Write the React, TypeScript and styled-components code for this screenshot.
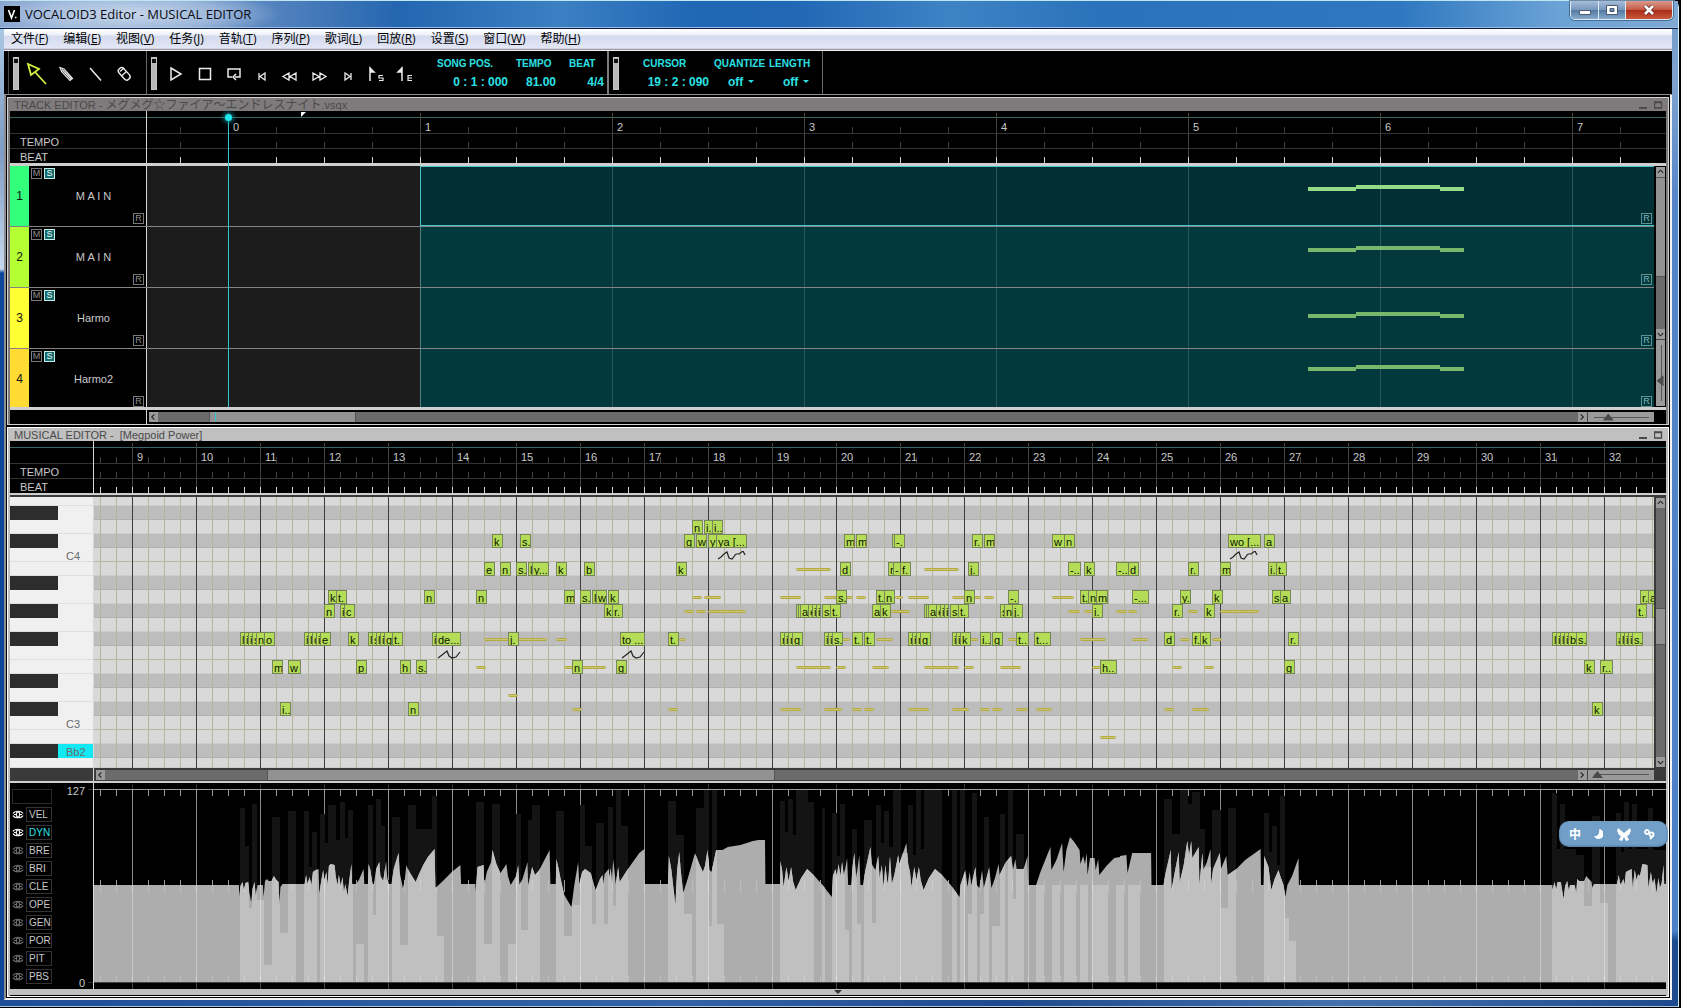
import React from "react";
import styled, { createGlobalStyle, css } from "styled-components";

const GlobalStyle = createGlobalStyle`
  *, *::before, *::after { box-sizing: border-box; }
  body {
    margin: 0;
    background: #000;
    font-family: "Liberation Sans", "Noto Sans CJK SC", sans-serif;
    font-size: 11px;
    color: #c8c8c8;
    overflow: hidden;
  }
  button, select, input { font: inherit; color: inherit; margin: 0; padding: 0; border: 0; background: none; }
`;

const sans = `"Liberation Sans", "Noto Sans CJK SC", sans-serif`;
const cyan = "#2be0e4";

/* ---------- window frame ---------- */

const Frame = styled.div`
  margin-right: 2px;
  padding: 0 6px 6px 4px;
  border-radius: 0 7px 0 0;
  border-top: 1px solid #bfe4f2;
  border-right: 1px solid #d4eefa;
  border-bottom: 1px solid #a9c4e6;
  background:
    linear-gradient(90deg, #1e4f97, #3363a5 40%, #1d4a8c 60%, #4470ad 80%, #1d4a8c) left bottom / 100% 6px no-repeat,
    linear-gradient(180deg, #a9c6e2 0, #a9c6e2 30px, #7f9cc4 150px, #c6d8ec 268px, #0c479a 272px, #0c479a) left top / 4px 100% no-repeat,
    linear-gradient(180deg, #6f9cc9 0, #7fa3cf 80px, #5585c8 200px, #4b7fc6 930px, #1b4a8f 940px) right top / 8px 100% no-repeat;
`;

const TitleBar = styled.header`
  display: flex;
  align-items: center;
  height: 28px;
  margin: 0 -6px 0 -4px;
  padding: 0 5px 1px 4px;
  gap: 5px;
  border-bottom: 1px solid #0b1f4a;
  background:
    radial-gradient(ellipse 150px 26px at 130px 13px, rgba(220, 230, 242, 0.8), rgba(200, 216, 236, 0.55) 60%, transparent 100%),
    linear-gradient(180deg, transparent 26px, #9dbde0 26px),
    linear-gradient(90deg, #86a4cf 0, #5c88c0 250px, #2466b0 400px, #3c7fc2 560px, #1f66b4 700px, #2268b5 800px, #3e83c4 950px, #2a72ba 1100px, #2f78c0 1400px, #6ba3d6 1560px, #7fa9d2 100%);
`;

const Logo = styled.svg`
  width: 16px;
  height: 16px;
`;

const WindowTitle = styled.h1`
  margin: 0;
  flex: 1;
  font: 400 13px/16px "Open Sans", "Noto Sans", sans-serif;
  color: #0a0a12;
`;

const CaptionButtons = styled.div`
  display: flex;
  align-self: flex-start;
  height: 19px;
  border: 1px solid #dcebf6;
  border-top: 0;
  border-radius: 0 0 5px 5px;
  overflow: hidden;
  box-shadow: 0 0 0 1px rgba(20, 50, 90, 0.5);
`;

const CaptionButton = styled.button<{ $close?: boolean }>`
  width: ${(p) => (p.$close ? 47 : 27)}px;
  display: flex;
  align-items: center;
  justify-content: center;
  border-left: 1px solid #dcebf6;
  background: ${(p) =>
    p.$close
      ? "linear-gradient(180deg,#d99a8c 0,#c65a45 48%,#a92c17 50%,#c9573c 100%)"
      : "linear-gradient(180deg,#a6bdd8 0,#7898be 48%,#54779f 50%,#86a9cd 100%)"};
  &:first-child { border-left: 0; }
`;

const MenuBar = styled.nav`
  display: flex;
  gap: 1px;
  height: 22px;
  padding-top: 1px;
  border-bottom: 1px solid #f4f4f6;
  box-shadow: inset 0 -1px 0 #9a9aa6, inset 0 -2px 0 #d0d2e0;
  background: linear-gradient(180deg, #fff 0, #eef0f9 6px, #d4dbee 7px, #e2e6f5 19px);
`;

const MenuItem = styled.button`
  padding: 0 7px;
  font: 400 12px/16px "Open Sans", "Noto Sans CJK SC", sans-serif;
  color: #000;
  height: 18px;
`;

/* ---------- toolbar ---------- */

const Toolbar = styled.div`
  display: flex;
  height: 44px;
  padding-left: 4px;
  background: #000;
  border-bottom: 1px solid #909090;
  color: ${cyan};
`;

const ToolGroup = styled.div<{ $end?: string; $w: number }>`
  display: flex;
  width: ${(p) => p.$w}px;
  padding: 6px 0 4px 4px;
  border-right: ${(p) => p.$end ?? "1px solid #666"};
  &:first-child { border-left: 1px solid #4c4c4c; }
`;

const Grip = styled.span`
  flex: none;
  width: 6px;
  height: 33px;
  background: #b8b8b8;
  border: 1px solid #c4c4c4;
  &::before {
    content: "";
    display: block;
    width: 4px;
    height: 4px;
    margin-top: 1px;
    background: #111;
  }
`;

const ToolRow = styled.div<{ $pad: number }>`
  display: flex;
  align-items: center;
  padding-left: ${(p) => p.$pad}px;
`;

const ToolButton = styled.button<{ $w?: number }>`
  width: ${(p) => p.$w ?? 29}px;
  height: 28px;
  color: #e8e8e8;
  svg { display: block; width: 20px; height: 24px; margin: 0 auto; overflow: visible; }
`;

const Readout = styled.div<{ $w: number; $ml?: number }>`
  display: flex;
  flex-direction: column;
  width: ${(p) => p.$w}px;
  margin-left: ${(p) => p.$ml ?? 0}px;
  font-weight: 700;
  white-space: pre;
`;

const ReadoutLabel = styled.label`
  font-size: 10px;
  line-height: 14px;
`;

const ReadoutValue = styled.output`
  font-size: 12px;
  line-height: 16px;
  margin-top: 3px;
  text-align: right;
`;

const Picker = styled.div`
  display: flex;
  align-items: center;
  margin: 3px 0 0 14px;
  gap: 3px;
`;

const PickerSelect = styled.select`
  appearance: none;
  font-weight: 700;
  font-size: 12px;
  line-height: 16px;
  height: 16px;
  width: 17px;
  outline: none;
`;

/* ---------- MDI panels ---------- */

const Workspace = styled.main`
  padding: 2px 1px 1px 1px;
  display: flex;
  flex-direction: column;
  gap: 2px;
  background: #000;
  border: 0 solid #f2f2f2;
  border-width: 0 2px 2px 2px;
  border-left-color: #8c8c92;
`;

const Panel = styled.section<{ $active?: boolean }>`
  padding: 0 2px;
  border: 1px solid ${(p) => (p.$active ? "#fff" : "#d0d0d0")};
  background: ${(p) => (p.$active ? "#c0c0c0" : "#7f7b7c")};
`;

const PanelBody = styled.div`
  background: #000;
`;

const PanelTitle = styled.div`
  display: flex;
  height: 13px;
  padding-left: 4px;
  overflow: hidden;
  color: #4a4a4a;
`;

const PanelName = styled.h2`
  flex: 1;
  margin: 0;
  font: 400 11px/15px ${sans};
  white-space: pre;
`;

const FileName = styled.span`
  font: 400 12px/15px "Liberation Sans", "Noto Sans CJK JP", sans-serif;
`;

const PanelButton = styled.button`
  width: 15px;
  height: 13px;
  svg { display: block; margin: 0 auto; }
`;

/* ---------- ruler ---------- */

const Header = styled.div`
  display: flex;
  height: 52px;
  position: relative;
  background: linear-gradient(#3b6464, #3b6464) 0 6px / 100% 1px no-repeat;
`;

const HeaderLabels = styled.div<{ $w: number }>`
  width: ${(p) => p.$w}px;
  border-right: 1px solid #d8d8d8;
`;

const HeaderRow = styled.div<{ $first?: boolean; $last?: boolean }>`
  height: ${(p) => (p.$first ? 23 : p.$last ? 14 : 15)}px;
  border-bottom: ${(p) => (p.$last ? "0" : "1px solid #333")};
  padding-left: 10px;
  font-size: 11px;
  line-height: 16px;
`;

const Scale = styled.div<{ $pitch: number; $offset: number }>`
  flex: 1;
  min-width: 0;
  background:
    linear-gradient(90deg, #454545 1px, transparent 1px) ${(p) => p.$offset}px 2px / ${(p) => p.$pitch}px 50px repeat-x;
`;

const ScaleRow = styled.div<{ $pitch: number; $offset: number; $kind: "bars" | "tempo" | "beat" }>`
  display: flex;
  overflow: hidden;
  height: ${(p) => (p.$kind === "bars" ? 23 : p.$kind === "beat" ? 14 : 15)}px;
  padding-left: ${(p) => p.$offset}px;
  border-bottom: ${(p) => (p.$kind === "beat" ? "0" : "1px solid #333")};
  background: linear-gradient(90deg, ${(p) => (p.$kind === "beat" ? "#d8d8d8" : "#3d3d3d")} 1px, transparent 1px)
    ${(p) => p.$offset % (p.$pitch / 4)}px bottom / ${(p) => p.$pitch / 4}px 6px repeat-x;
`;

const Measure = styled.span<{ $pitch: number }>`
  flex: 0 0 ${(p) => p.$pitch}px;
  padding: 10px 0 0 5px;
  font-size: 11px;
  line-height: 12px;
`;

const Band = styled.div<{ $h: number; $dark?: boolean }>`
  height: ${(p) => p.$h}px;
  background: ${(p) => (p.$dark ? "#3a3a3a" : "#cfcfcf")};
`;

const PlayHead = styled.div`
  position: absolute;
  left: 218px;
  top: 6px;
  width: 1px;
  height: 290px;
  background: #31c8cc;
  z-index: 3;
  &::before {
    content: "";
    position: absolute;
    left: -3px;
    top: -3px;
    width: 7px;
    height: 7px;
    border-radius: 50%;
    background: #1fe8f0;
    box-shadow: 0 0 4px 2px rgba(20, 150, 160, 0.7);
  }
`;

const EndFlag = styled.div`
  position: absolute;
  left: 291px;
  top: 1px;
  width: 5px;
  height: 5px;
  background: #fff;
  clip-path: polygon(0 0, 100% 0, 0 100%);
`;

/* ---------- tracks ---------- */

const TrackArea = styled.div`
  display: flex;
  height: 241px;
`;

const TrackList = styled.div`
  flex: 1;
  min-width: 0;
  overflow: hidden;
`;

const TrackRow = styled.div`
  display: flex;
  height: 61px;
  border-bottom: 1px solid #838383;
`;

const TrackNumber = styled.div<{ $c: string }>`
  width: 19px;
  background: ${(p) => p.$c};
  color: #111;
  text-align: center;
  font-size: 12px;
  line-height: 60px;
`;

const TrackHead = styled.div`
  display: grid;
  grid-template-rows: 11px 1fr 11px;
  width: 118px;
  padding: 2px;
  border-right: 1px solid #d8d8d8;
`;

const Toggles = styled.div`
  display: flex;
  gap: 2px;
`;

const BoxButton = styled.button<{ $tone?: "solo" | "teal" }>`
  display: block;
  width: 11px;
  height: 11px;
  border: 1px solid #7a7a7a;
  font-size: 9px;
  line-height: 9px;
  text-align: center;
  color: #909090;
  ${(p) => p.$tone === "solo" && css`border-color: #c8ecec; background: #156a6c; color: #e8ffff;`}
  ${(p) => p.$tone === "teal" && css`border-color: #5d9293; color: #7ab2b3;`}
`;

const TrackName = styled.div`
  align-self: center;
  padding-left: 12px;
  text-align: center;
  font-size: 11px;
  line-height: 14px;
  white-space: pre;
`;

const EndCell = styled.div`
  display: flex;
  justify-content: flex-end;
`;

const Lane = styled.div`
  flex: 1;
  min-width: 0;
  display: flex;
  padding-left: 273px;
  background: #1c1c1c;
`;

const Part = styled.div<{ $selected?: boolean }>`
  flex: 1;
  min-width: 0;
  position: relative;
  display: flex;
  justify-content: flex-end;
  align-items: flex-end;
  padding: 0 2px 2px 0;
  overflow: hidden;
  border-left: 1px solid #4f8283;
  background:
    linear-gradient(90deg, #25595b 1px, transparent 1px) -1px 0 / 192px 100%,
    ${(p) => (p.$selected ? "#022f33" : "#03393d")};
  ${(p) => p.$selected && css`border: solid #42c6cc; border-width: 1px 0 1px 1px; padding-bottom: 1px;`}
`;

const Phrase = styled.svg<{ $top: number }>`
  position: absolute;
  left: 887px;
  top: ${(p) => p.$top}px;
  width: 156px;
  height: 6px;
`;

/* ---------- scroll bars ---------- */

const VColumn = styled.div<{ $bg?: string }>`
  display: flex;
  flex-direction: column;
  align-items: center;
  width: 12px;
  padding: 1px 0;
  background: ${(p) => p.$bg ?? "#000"};
`;

const HRow = styled.div<{ $bg?: string; $h: number }>`
  display: flex;
  align-items: center;
  height: ${(p) => p.$h}px;
  background: ${(p) => p.$bg ?? "#000"};
`;

const HSpacer = styled.div<{ $w: number }>`
  width: ${(p) => p.$w}px;
  align-self: stretch;
  margin-right: 2px;
  border-right: 1px solid #d8d8d8;
`;

const HEnd = styled.div`
  width: 12px;
`;

const Arrow = styled.button`
  flex: none;
  width: 9px;
  height: 10px;
  background: #9a9a9a;
  svg { display: block; margin: 0 auto; }
`;

const ScrollTrack = styled.div<{ $vertical?: boolean; $size?: number }>`
  position: relative;
  flex: ${(p) => (p.$size ? `0 0 ${p.$size}px` : "1")};
  ${(p) => (p.$vertical ? "width: 9px;" : "height: 10px;")}
  background: #6b6b6b;
`;

const HThumb = styled.div<{ $start: number; $size: number }>`
  position: absolute;
  left: ${(p) => p.$start}px;
  width: ${(p) => p.$size}px;
  height: 100%;
  background: #929292;
  border: solid #555;
  border-width: 0 1px;
`;

const VThumb = styled.div<{ $start: number; $size: number }>`
  position: absolute;
  top: ${(p) => p.$start}px;
  height: ${(p) => p.$size}px;
  width: 100%;
  background: #929292;
  border: solid #555;
  border-width: 1px 0;
`;

const Marker = styled.div`
  position: absolute;
  left: 57px;
  width: 1px;
  height: 100%;
  background: #31c8cc;
`;

const ZoomBox = styled.div<{ $vertical?: boolean }>`
  display: flex;
  align-items: center;
  justify-content: center;
  background: #9a9a9a;
  ${(p) => (p.$vertical ? "width: 9px; flex: 1; border-top: 1px solid #444;" : "width: 67px; height: 10px; border-left: 1px solid #444;")}
  overflow: hidden;
`;

const Zoom = styled.input<{ $vertical?: boolean }>`
  appearance: none;
  display: block;
  ${(p) =>
    p.$vertical
      ? css`writing-mode: vertical-lr; width: 9px; height: 60px;
          background: linear-gradient(#555, #555) 5px center / 1px 56px no-repeat;`
      : css`width: 60px; height: 9px;
          background: linear-gradient(#555, #555) center 4px / 55px 1px no-repeat;`}
  &::-webkit-slider-thumb {
    appearance: none;
    ${(p) => (p.$vertical ? "width: 7px; height: 11px;" : "width: 11px; height: 7px;")}
    background: #4a4a4a;
    clip-path: ${(p) => (p.$vertical ? "polygon(0 50%, 100% 0, 100% 100%)" : "polygon(50% 0, 100% 100%, 0 100%)")};
  }
`;

/* ---------- piano roll ---------- */

const RollArea = styled.div`
  display: flex;
  height: 271px;
`;

const Keyboard = styled.div`
  display: flex;
  flex-direction: column;
  justify-content: flex-end;
  width: 84px;
  overflow: hidden;
  border-right: 1px solid #d8d8d8;
  background: #f0f0f0;
`;

const Key = styled.div<{ $black?: boolean; $hot?: boolean; $h: number }>`
  flex: none;
  height: ${(p) => p.$h}px;
  padding: 1px 0 0 56px;
  font-size: 11px;
  line-height: 15px;
  color: #6a6a6a;
  border-bottom: ${(p) => (p.$black ? "0" : "1px solid #dedede")};
  background: ${(p) =>
    p.$black ? `linear-gradient(90deg, #2d2d2d 48px, ${p.$hot ? "#10e8f2" : "#f0f0f0"} 48px)` : "#f0f0f0"};
`;

const Roll = styled.div`
  flex: 1;
  min-width: 0;
  position: relative;
  overflow: hidden;
  display: flex;
  flex-direction: column;
`;

const Pitch = styled.div<{ $black?: boolean; $seam?: boolean; $h: number }>`
  flex: none;
  height: ${(p) => p.$h}px;
  background: ${(p) => (p.$black ? "#bdbdbd" : "#d9d9d9")};
  border-bottom: 1px solid ${(p) => (p.$seam ? "#b9b9a3" : p.$black ? "#b0b0b0" : "#cdcdcd")};
`;

const BeatLines = styled.div`
  position: absolute;
  inset: 0;
  background:
    linear-gradient(90deg, #3c3c3c 1px, transparent 1px) 38px 0 / 64px 100%,
    linear-gradient(90deg, #b5b59c 1px, transparent 1px) 6px 0 / 16px 100%;
`;

const Note = styled.div`
  position: absolute;
  height: 14px;
  border: 1px solid #77865a;
  background: #b4dc56;
  color: #0c1404;
  font-size: 11px;
  line-height: 14px;
  padding-left: 1px;
  overflow: hidden;
  white-space: pre;
  text-align: left;
`;

const Ghost = styled.div`
  position: absolute;
  height: 3px;
  border-radius: 2px;
  border: 1px solid #b5ab3c;
  background: #c9c77c;
`;

const Vibrato = styled.svg`
  position: absolute;
  height: 9px;
`;

/* ---------- control parameters ---------- */

const ParamArea = styled.div`
  display: flex;
  height: 206px;
`;

const ParamList = styled.div`
  display: grid;
  grid-template-columns: 14px 26px;
  grid-auto-rows: 15px;
  row-gap: 3px;
  align-content: start;
  padding: 6px 0 0 2px;
  width: 44px;
`;

const ParamBlank = styled.div`
  grid-column: 1 / 3;
  border: 1px solid #2c2c2c;
`;

const EyeButton = styled.button<{ $on?: boolean }>`
  color: ${(p) => (p.$on ? "#f4f4f4" : "#6a6a6a")};
  svg { display: block; }
`;

const ParamButton = styled.button<{ $active?: boolean }>`
  border: 1px solid #333;
  padding-left: 2px;
  text-align: left;
  font: 400 10px/13px ${sans};
  color: ${(p) => (p.$active ? cyan : "#c8c8c8")};
  overflow: hidden;
`;

const Limits = styled.div`
  display: flex;
  flex-direction: column;
  justify-content: space-between;
  width: 40px;
  padding: 2px 8px 0 0;
  text-align: right;
  font-size: 11px;
  line-height: 12px;
  border-right: 1px solid #d8d8d8;
  background:
    linear-gradient(#333, #333) right 6px / 5px 1px no-repeat,
    linear-gradient(#333, #333) right 199px / 5px 1px no-repeat;
`;

const Graph = styled.svg`
  flex: 1;
  min-width: 0;
  height: 206px;
  display: block;
`;

const Splitter = styled.button`
  display: flex;
  justify-content: center;
  width: 100%;
  height: 6px;
  background: #c0c0c0;
  svg { display: block; }
`;

const BottomEdge = styled.div`
  height: 1px;
  background: #000;
`;

/* ---------- input method bar ---------- */

const ImeBar = styled.aside`
  position: absolute;
  right: 13px;
  top: 821px;
  display: flex;
  align-items: center;
  justify-content: space-between;
  width: 109px;
  height: 26px;
  padding: 0 13px 0 10px;
  border-radius: 10px;
  background: #719fc8;
  color: #fff;
  font: 700 12px/16px "Noto Sans CJK SC", sans-serif;
  z-index: 5;
  box-shadow: inset 0 -1px 2px rgba(40, 80, 130, 0.5);
`;

/* ---------- data ---------- */

const menus: [string, string][] = [
  ["文件", "F"], ["编辑", "E"], ["视图", "V"], ["任务", "J"], ["音轨", "T"], ["序列", "P"],
  ["歌词", "L"], ["回放", "R"], ["设置", "S"], ["窗口", "W"], ["帮助", "H"],
];

const tracks = [
  { name: "M A I N", color: "#33ff7a", phrase: 18, selected: true },
  { name: "M A I N", color: "#b4ff33", phrase: 19, selected: false },
  { name: "Harmo", color: "#ffff33", phrase: 24, selected: false },
  { name: "Harmo2", color: "#ffdb33", phrase: 16, selected: false },
];

type K = { h: number; b?: boolean; t?: string; hot?: boolean; seam?: boolean };
const keys: K[] = [
  { h: 9 }, { h: 14, b: true }, { h: 14 }, { h: 14, b: true }, { h: 14, t: "C4", seam: true }, { h: 14 },
  { h: 14, b: true }, { h: 14 }, { h: 14, b: true }, { h: 14 }, { h: 14, b: true }, { h: 14, seam: true }, { h: 14 },
  { h: 14, b: true }, { h: 14 }, { h: 14, b: true }, { h: 14, t: "C3", seam: true }, { h: 14 },
  { h: 14, b: true, t: "Bb2", hot: true }, { h: 10 },
];

/* key row → notes as [start, width, lyric] in roll pixels */
const notes: Record<number, [number, number, string][]> = {
  23: [[598, 11, "n"], [610, 9, "i."], [618, 11, "i.."]],
  37: [[398, 11, "k"], [426, 11, "s."], [590, 11, "g"], [602, 11, "w"], [614, 9, "y"], [622, 31, "ya [..."],
    [750, 11, "m"], [762, 11, "m"], [798, 3, ""], [800, 11, "-."], [878, 11, "r."], [890, 11, "m"],
    [958, 13, "w"], [970, 11, "n"], [1134, 33, "wo [..."], [1170, 11, "a"]],
  65: [[390, 11, "e"], [406, 11, "n"], [422, 11, "s."], [434, 5, "l"], [438, 17, "y..."], [462, 11, "k"], [490, 11, "b"],
    [582, 11, "k"], [746, 11, "d"], [794, 6, "r"], [799, 8, "-"], [806, 11, "f."], [874, 11, "j."],
    [974, 13, "-.."], [990, 11, "k"], [1022, 13, "-.."], [1034, 11, "d"], [1094, 11, "r."], [1126, 11, "m"],
    [1174, 9, "i."], [1182, 11, "t."]],
  93: [[234, 9, "k"], [242, 11, "t."], [330, 11, "n"], [382, 11, "n"], [470, 11, "m"], [486, 11, "s."], [498, 5, "l"],
    [502, 11, "w"], [514, 11, "k"], [742, 11, "s."], [782, 9, "t."], [790, 11, "n"], [870, 11, "n"], [914, 11, "-."],
    [986, 9, "t."], [994, 9, "n"], [1002, 12, "m"], [1038, 17, "-..."], [1086, 11, "y."], [1118, 11, "k"],
    [1178, 9, "s"], [1186, 11, "a"], [1546, 9, "r."], [1554, 11, "a"]],
  107: [[230, 11, "n"], [246, 5, "i"], [250, 11, "c"], [510, 9, "k"], [518, 11, "r."],
    [702, 3, ""], [704, 3, ""], [706, 9, "a"], [714, 5, "e"], [718, 5, "i"], [722, 5, "i"], [728, 9, "s"], [736, 11, "t."],
    [778, 9, "a"], [786, 11, "k"],
    [830, 3, ""], [832, 3, ""], [834, 9, "a"], [842, 5, "e"], [846, 5, "i"], [850, 5, "i"], [856, 9, "s"], [864, 11, "t."],
    [906, 5, "s"], [910, 9, "n"], [918, 11, "j."], [998, 11, "i."], [1078, 11, "r."], [1110, 11, "k"],
    [1542, 11, "t."], [1558, 8, ""]],
  135: [[146, 5, "l"], [150, 5, "i"], [154, 5, "i"], [158, 5, "s"], [162, 9, "n"], [170, 11, "o"],
    [210, 5, "i"], [214, 5, "l"], [218, 5, "d"], [222, 5, "i"], [226, 11, "e"], [254, 11, "k"],
    [274, 5, "l"], [278, 5, "s"], [282, 5, "l"], [286, 5, "i"], [290, 9, "g"], [298, 11, "t."],
    [338, 5, "i"], [342, 25, "de..."], [414, 11, "j."], [526, 25, "to ..."], [574, 11, "t."],
    [686, 5, "r"], [690, 5, "i"], [694, 5, "r"], [698, 11, "g"], [730, 5, "i"], [734, 5, "i"], [738, 11, "s."],
    [758, 11, "t."], [770, 11, "t."], [814, 5, "r"], [818, 5, "i"], [822, 5, "r"], [826, 11, "g"],
    [858, 5, "i"], [862, 5, "i"], [866, 11, "k"], [886, 11, "i.."], [898, 11, "g"], [922, 13, "t.."], [940, 17, "t..."],
    [1070, 11, "d"], [1098, 9, "f."], [1106, 11, "k"], [1194, 11, "r."],
    [1458, 5, "l"], [1462, 5, "i"], [1466, 5, "l"], [1470, 5, "i"], [1474, 9, "b"], [1482, 11, "s."],
    [1522, 5, "a"], [1526, 5, "l"], [1530, 5, "i"], [1534, 5, "i"], [1538, 11, "s."]],
  163: [[178, 11, "m"], [194, 13, "w"], [262, 11, "p"], [306, 11, "h"], [322, 11, "s."], [478, 11, "n"], [522, 11, "g"],
    [1006, 17, "h.."], [1190, 11, "g"], [1490, 11, "k"], [1506, 13, "r.."]],
  205: [[186, 11, "i.."], [314, 11, "n"], [1498, 11, "k"]],
};

const ghosts: Record<number, [number, number][]> = {
  65: [[702, 35], [830, 35]],
  93: [[598, 10], [610, 17], [686, 21], [730, 29], [762, 10], [801, 8], [814, 21], [858, 13], [880, 7], [890, 10], [958, 12], [968, 12]],
  107: [[590, 10], [602, 10], [614, 38], [797, 19], [974, 12], [990, 9], [1022, 11], [1034, 9], [1094, 10], [1126, 39]],
  135: [[390, 63], [462, 11], [585, 7], [748, 8], [782, 17], [876, 8], [914, 9], [986, 26], [1038, 16], [1086, 10], [1118, 10]],
  163: [[382, 10], [470, 10], [488, 24], [702, 35], [742, 10], [778, 17], [830, 35], [870, 10], [906, 21], [998, 9], [1078, 10], [1110, 10]],
  191: [[414, 10]],
  205: [[478, 10], [574, 10], [686, 21], [730, 18], [758, 10], [770, 10], [814, 21], [858, 17], [886, 10], [898, 10], [922, 12], [942, 16], [1070, 10], [1098, 17]],
  233: [[1006, 16]],
};

const vibratos: [number, number, number][] = [[343, 153, 0], [527, 153, 0], [623, 54, 1], [1135, 54, 1]];

/* velocity bars, three stretches of the song, as [from, to, top] at triple scale */
const velA: number[][] = [[672,686,113],[686,697,228],[697,706,413],[706,720,101],[720,739,390],[739,762,585],[762,784,141],[784,806,488],[806,829,123],[851,865,123],[865,874,292],[874,888,185],[896,910,131],[910,918,219],[918,941,104],[941,952,209],[952,966,95],[966,974,204],[974,988,119],[997,1019,521],[1030,1044,104],[1044,1053,435],[1053,1067,86],[1067,1078,167],[1078,1089,330],[1098,1120,141],[1120,1142,524],[1142,1165,104],[1165,1210,177],[1210,1224,77],[1224,1243,497],[1333,1356,95],[1356,1378,521],[1378,1400,101],[1422,1445,521],[1445,1459,131],[1459,1478,479],[1478,1490,150],[1490,1512,104],[1557,1568,123]];
const velB: number[][] = [[0,11,123],[11,34,497],[34,57,405],[57,70,105],[70,90,228],[90,101,461],[101,123,158],[123,134,461],[134,148,110],[148,157,408],[157,171,60],[171,190,167],[302,325,92],[325,347,195],[347,370,432],[381,403,113],[403,417,60],[417,426,467],[426,440,60],[440,459,461],[616,630,92],[630,638,185],[638,652,86],[652,661,195],[661,694,60],[694,711,95],[734,742,113],[762,776,128],[776,784,258],[784,798,101],[798,809,479],[818,832,176],[832,843,461],[851,874,150],[874,885,459],[885,899,104],[899,907,219],[907,921,122],[921,932,230],[932,955,60],[955,974,250],[974,988,104],[988,997,255],[997,1011,60],[1011,1019,237],[1019,1070,60],[1098,1112,60],[1120,1134,60],[1142,1154,432],[1154,1168,68],[1176,1187,432],[1187,1201,141],[1210,1232,467],[1232,1246,131],[1254,1268,60],[1268,1277,387],[1277,1299,191],[1333,1356,345],[1378,1400,345],[1411,1446,345],[1455,1478,345],[1490,1534,345],[1556,1568,345]];
const velC: number[][] = [[0,12,345],[21,57,345],[123,145,86],[145,168,191],[168,190,60],[190,201,101],[201,224,66],[224,238,177],[238,257,290],[257,281,119],[281,302,413],[302,325,113],[402,416,128],[416,425,246],[425,439,167],[439,447,285],[447,461,77],[461,472,443],[472,492,512],[1207,1221,68],[1221,1230,237],[1230,1244,101],[1244,1275,237],[1275,1297,255],[1297,1319,408],[1319,1342,138],[1342,1364,399],[1386,1400,128],[1400,1409,245],[1409,1423,95],[1423,1431,237],[1431,1445,101],[1445,1476,237],[1476,1490,113],[1490,1540,240]];

/* dynamics curve points as x,y pairs on the same scales */
const dynA = [262,345,669,345,670,378,673,347,679,336,683,360,687,338,695,336,698,365,703,396,707,357,713,336,716,378,721,345,736,345,738,381,742,333,748,327,752,333,760,333,767,318,774,330,780,336,782,405,785,351,791,342,853,342,857,315,861,342,867,322,872,345,876,306,884,300,892,297,894,369,900,330,905,300,908,330,914,306,917,345,921,288,926,282,937,284,940,318,945,345,949,315,954,348,959,322,963,366,967,342,973,378,978,330,984,282,986,342,997,342,1005,330,1018,297,1020,342,1030,342,1032,282,1037,300,1043,342,1047,342,1053,297,1062,276,1065,318,1073,333,1081,273,1084,318,1088,342,1096,342,1103,294,1116,249,1119,306,1128,354,1133,333,1138,285,1142,297,1150,312,1164,336,1172,315,1185,285,1198,261,1217,237,1219,354,1240,333,1265,306,1289,285,1291,342,1331,342,1332,363,1337,291,1354,285,1356,345,1363,306,1375,276,1379,240,1390,282,1401,308,1411,294,1418,282,1422,318,1430,345,1445,318,1451,285,1454,345,1463,327,1477,276,1479,348,1490,291,1498,315,1510,300,1539,240,1541,342,1556,342,1558,267,1565,300];
const dynB = [0,318,12,375,32,411,40,345,51,276,54,342,62,306,70,297,86,308,100,360,112,327,119,315,121,345,125,312,136,297,138,325,142,294,146,342,149,267,153,306,156,342,163,291,167,336,190,297,222,250,236,237,237,342,302,342,305,258,312,300,323,405,328,300,334,246,338,300,345,369,358,325,378,249,390,282,400,306,406,288,413,240,419,300,424,306,430,276,437,240,455,239,470,232,505,224,540,213,556,210,574,210,575,342,616,342,617,273,622,300,626,351,634,291,640,333,647,291,653,336,660,360,675,325,692,297,710,315,735,345,761,381,764,318,771,297,775,318,780,282,785,318,790,276,795,318,804,264,807,345,815,345,819,290,824,249,829,327,838,255,841,345,848,345,855,300,869,231,873,282,883,300,891,258,895,325,901,285,906,351,911,285,917,342,920,318,924,258,929,342,936,315,947,255,950,282,970,219,975,282,980,306,984,351,992,291,998,330,1005,291,1010,330,1018,360,1033,325,1050,297,1070,315,1094,345,1119,381,1121,345,1135,300,1141,350,1147,306,1152,345,1163,291,1167,345,1174,354,1182,300,1187,354,1202,291,1208,354,1218,325,1228,282,1231,315,1248,276,1263,258,1268,300,1275,268,1278,297,1298,297,1309,258,1311,345,1333,345,1345,306,1373,231,1376,300,1390,270,1406,219,1410,306,1418,240,1428,201,1440,216,1455,240,1457,282,1465,258,1470,282,1475,249,1477,315,1484,264,1497,264,1500,300,1507,267,1510,315,1530,288,1552,264,1568,261];
const dynC = [0,258,18,255,21,309,34,249,87,249,88,345,121,345,128,306,142,240,144,360,152,312,164,246,167,336,178,285,188,213,193,255,199,213,202,264,220,231,222,345,230,249,233,300,243,275,253,237,255,342,260,297,279,249,282,297,297,258,301,315,325,297,350,270,393,237,394,345,401,345,403,258,415,291,423,360,432,327,443,300,447,315,457,345,462,381,468,345,481,318,499,264,500,345,1208,345,1208,360,1215,336,1219,360,1223,336,1232,336,1240,387,1244,348,1250,333,1254,360,1258,345,1271,345,1275,369,1278,327,1283,333,1297,333,1303,318,1318,336,1320,354,1325,342,1389,342,1394,315,1399,345,1407,327,1410,345,1414,306,1430,297,1433,354,1439,300,1444,330,1448,312,1453,318,1460,282,1474,285,1477,354,1484,306,1489,342,1494,325,1499,369,1505,325,1509,354,1514,340,1519,285,1521,342,1900,342];

const graphX = (part: number, x: number) =>
  part === 0 ? x / 2.8 - 94 : part === 1 ? x / 2.8 + 466 : x / 2.795 + 1026;
const graphY = (y: number) => Math.round(y / 3) - 13;

const dynPoints = [dynA, dynB, dynC]
  .flatMap((list, part) => {
    const out: string[] = [];
    for (let i = 0; i < list.length; i += 2) out.push(`${graphX(part, list[i]).toFixed(1)},${graphY(list[i + 1])}`);
    return out;
  })
  .join(" ");
const dynArea = `0,199 ${dynPoints} 1800,199`;

const velBars = [velA, velB, velC].flatMap((list, part) =>
  list.map(([a, b, y]) => {
    const x0 = Math.round(graphX(part, a));
    return { x: x0, w: Math.round(graphX(part, b)) - x0, y: graphY(y) };
  })
);

const params = ["VEL", "DYN", "BRE", "BRI", "CLE", "OPE", "GEN", "POR", "PIT", "PBS"];

/* ---------- parts ---------- */

function Ruler({ label, pitch, offset, first, count, children }: {
  label: number; pitch: number; offset: number; first: number; count: number; children?: React.ReactNode;
}) {
  return (
    <Header>
      <HeaderLabels $w={label}>
        <HeaderRow $first />
        <HeaderRow>TEMPO</HeaderRow>
        <HeaderRow $last>BEAT</HeaderRow>
      </HeaderLabels>
      <Scale $pitch={pitch} $offset={offset}>
        <ScaleRow $pitch={pitch} $offset={offset} $kind="bars">
          {Array.from({ length: count }, (_, i) => (
            <Measure key={i} $pitch={pitch}>{first + i}</Measure>
          ))}
        </ScaleRow>
        <ScaleRow $pitch={pitch} $offset={offset} $kind="tempo" />
        <ScaleRow $pitch={pitch} $offset={offset} $kind="beat" />
      </Scale>
      {children}
    </Header>
  );
}

const arrowPaths = { left: "M6 2 3 5l3 3", right: "M3 2l3 3-3 3", up: "M2 6l3-3 3 3", down: "M2 4l3 3 3-3" };
function ScrollArrow({ dir }: { dir: keyof typeof arrowPaths }) {
  return (
    <Arrow aria-label={`Scroll ${dir}`}>
      <svg width="9" height="10" viewBox="0 0 10 10"><path d={arrowPaths[dir]} fill="none" stroke="#222" strokeWidth="1.200" /></svg>
    </Arrow>
  );
}

function PanelButtons() {
  return (
    <>
      <PanelButton aria-label="Minimize">
        <svg width="9" height="13"><path d="M0 9h8v2H0z" fill="currentColor" /></svg>
      </PanelButton>
      <PanelButton aria-label="Maximize">
        <svg width="9" height="13"><path d="M.5 4.500h7v5.500h-7z M0 4h8" fill="none" stroke="currentColor" strokeWidth="1.300" /></svg>
      </PanelButton>
    </>
  );
}

function Eye() {
  return (
    <svg width="12" height="15" viewBox="0 0 12 15" fill="none" stroke="currentColor">
      <path d="M1 6.500C2.500 3.500 9.500 3.500 11 6.500M1 8.500C2.500 11.500 9.500 11.500 11 8.500" strokeWidth="1.200" />
      <ellipse cx="6" cy="7.500" rx="1.600" ry="2.600" strokeWidth="1.200" />
      <path d="M2 7.500h2M8 7.500h2" />
    </svg>
  );
}

function ToolIcon({ children, accent }: { children: React.ReactNode; accent?: boolean }) {
  return (
    <svg viewBox="0 0 20 24" fill="none" stroke={accent ? "#d2f03c" : "#ececec"} strokeWidth="1.500">{children}</svg>
  );
}

function MainToolbar() {
  return (
    <Toolbar>
      <ToolGroup $w={139}>
        <ToolRow $pad={0}><Grip /></ToolRow>
        <ToolRow $pad={3}>
          <ToolButton aria-label="Arrow"><ToolIcon accent><path d="M1 2l11 5-8 6zM8 10l11 12" strokeWidth="1.800" /></ToolIcon></ToolButton>
          <ToolButton aria-label="Pencil"><ToolIcon><path d="M4 5.500l4 1.500 8.500 9.500-2.500 2L5.500 9.500zM6 7.500l9 9.500" strokeWidth="1.200" /></ToolIcon></ToolButton>
          <ToolButton aria-label="Line"><ToolIcon><path d="M5 6l11 12.500" /></ToolIcon></ToolButton>
          <ToolButton aria-label="Eraser"><ToolIcon>
            <rect x="7" y="5" width="6.500" height="14" rx="3" transform="rotate(-42 10 12)" strokeWidth="1.400" />
            <path d="M7.500 14l5-4.500M6 9.500l4-3.500" strokeWidth="1.200" />
          </ToolIcon></ToolButton>
        </ToolRow>
      </ToolGroup>
      <ToolGroup $w={462} $end="2px solid #7c7c7c">
        <Grip />
        <ToolRow $pad={4}>
          <ToolButton aria-label="Play"><ToolIcon><path d="M5 6l10 6-10 6z" /></ToolIcon></ToolButton>
          <ToolButton aria-label="Stop"><ToolIcon><path d="M4.500 6.500h11v11h-11z" /></ToolIcon></ToolButton>
          <ToolButton aria-label="Loop"><ToolIcon><path d="M8 15H4V7h12v8h-5M12 12l-3 3 3 3" /></ToolIcon></ToolButton>
          <ToolButton $w={27} aria-label="To start"><ToolIcon><path d="M7 11v7M13 11l-5 3.500 5 3.500z" strokeWidth="1.300" /></ToolIcon></ToolButton>
          <ToolButton aria-label="Rewind"><ToolIcon><path d="M9 11l-6 3.500L9 18zM16 11l-6 3.500 6 3.500z" strokeWidth="1.300" /></ToolIcon></ToolButton>
          <ToolButton aria-label="Forward"><ToolIcon><path d="M4 11l6 3.500L4 18zM11 11l6 3.500-6 3.500z" strokeWidth="1.300" /></ToolIcon></ToolButton>
          <ToolButton aria-label="To end"><ToolIcon><path d="M13 11v7M7 11l5 3.500L7 18z" strokeWidth="1.300" /></ToolIcon></ToolButton>
          <ToolButton $w={28} aria-label="Start marker"><ToolIcon><path d="M4 5v14M4 6l4 4H4z" fill="#ececec" /><path d="M17 13.500h-4v2.500h4v2.500h-4" strokeWidth="1.200" /></ToolIcon></ToolButton>
          <ToolButton $w={28} aria-label="End marker"><ToolIcon><path d="M8 5v14M8 6l-4 4h4z" fill="#ececec" /><path d="M18 13.500h-4v5h4M14 16h4" strokeWidth="1.200" /></ToolIcon></ToolButton>
        </ToolRow>
        <Readout $w={71} $ml={19}>
          <ReadoutLabel htmlFor="song">SONG POS.</ReadoutLabel>
          <ReadoutValue id="song">0 : 1 : 000</ReadoutValue>
        </Readout>
        <Readout $w={40} $ml={8}>
          <ReadoutLabel htmlFor="tempo">TEMPO</ReadoutLabel>
          <ReadoutValue id="tempo">81.00</ReadoutValue>
        </Readout>
        <Readout $w={35} $ml={13}>
          <ReadoutLabel htmlFor="beat">BEAT</ReadoutLabel>
          <ReadoutValue id="beat">4/4</ReadoutValue>
        </Readout>
      </ToolGroup>
      <ToolGroup $w={214}>
        <Grip />
        <Readout $w={66} $ml={24}>
          <ReadoutLabel htmlFor="cursor">CURSOR</ReadoutLabel>
          <ReadoutValue id="cursor">19 : 2 : 090</ReadoutValue>
        </Readout>
        <Readout $w={51} $ml={5}>
          <ReadoutLabel htmlFor="quantize">QUANTIZE</ReadoutLabel>
          <Picker>
            <PickerSelect id="quantize"><option>off</option></PickerSelect>
            <svg width="6" height="4"><path d="M0 0h6L3 3z" fill={cyan} /></svg>
          </Picker>
        </Readout>
        <Readout $w={44} $ml={4}>
          <ReadoutLabel htmlFor="length">LENGTH</ReadoutLabel>
          <Picker>
            <PickerSelect id="length"><option>off</option></PickerSelect>
            <svg width="6" height="4"><path d="M0 0h6L3 3z" fill={cyan} /></svg>
          </Picker>
        </Readout>
      </ToolGroup>
    </Toolbar>
  );
}

function TrackEditor() {
  return (
    <Panel>
      <PanelTitle>
        <PanelName>TRACK EDITOR - <FileName>メグメグ☆ファイア〜エンドレスナイト</FileName>.vsqx</PanelName>
        <PanelButtons />
      </PanelTitle>
      <PanelBody>
        <Ruler label={137} pitch={192} offset={81} first={0} count={8}>
          <EndFlag />
          <PlayHead />
        </Ruler>
        <Band $h={3} />
        <TrackArea>
          <TrackList>
            {tracks.map((t, i) => (
              <TrackRow key={i}>
                <TrackNumber $c={t.color}>{i + 1}</TrackNumber>
                <TrackHead>
                  <Toggles>
                    <BoxButton aria-label="Mute">M</BoxButton>
                    <BoxButton $tone="solo" aria-label="Solo">S</BoxButton>
                  </Toggles>
                  <TrackName>{t.name}</TrackName>
                  <EndCell><BoxButton aria-label="Render">R</BoxButton></EndCell>
                </TrackHead>
                <Lane>
                  <Part $selected={t.selected}>
                    <Phrase $top={t.phrase}>
                      <path d="M0 2h48V0h84v2h24v4h-24V4H48v2H0z" fill={t.selected ? "#92dc86" : "#78b86c"} />
                    </Phrase>
                    <BoxButton $tone="teal" aria-label="Render part">R</BoxButton>
                  </Part>
                </Lane>
              </TrackRow>
            ))}
          </TrackList>
          <VColumn>
            <ScrollArrow dir="up" />
            <ScrollTrack $vertical $size={152}><VThumb $start={0} $size={100} /></ScrollTrack>
            <ScrollArrow dir="down" />
            <ZoomBox $vertical><Zoom $vertical type="range" aria-label="Vertical zoom" defaultValue={66} /></ZoomBox>
          </VColumn>
        </TrackArea>
        <Band $h={3} />
        <HRow $h={14}>
          <HSpacer $w={137} />
          <ScrollArrow dir="left" />
          <ScrollTrack><HThumb $start={51} $size={147} /><Marker /></ScrollTrack>
          <ScrollArrow dir="right" />
          <ZoomBox><Zoom type="range" aria-label="Horizontal zoom" defaultValue={24} /></ZoomBox>
          <HEnd />
        </HRow>
      </PanelBody>
    </Panel>
  );
}

function PianoRoll() {
  return (
    <Roll>
      {keys.map((k, i) => <Pitch key={i} $h={k.h} $black={k.b} $seam={k.seam} />)}
      <BeatLines />
      {Object.entries(ghosts).map(([top, list]) =>
        list.map(([x, w], i) => <Ghost key={top + i} style={{ left: x, width: w, top: Number(top) + 6 }} />)
      )}
      {Object.entries(notes).map(([top, list]) =>
        list.map(([x, w, lyric], i) => (
          <Note key={top + i} style={{ left: x, width: w, top: Number(top) }}>{lyric}</Note>
        ))
      )}
      {vibratos.map(([x, y, kind]) => (
        <Vibrato key={x} style={{ left: x, top: y, width: 32 }}>
          <path
            d={kind ? "M1 8l3-2 3-3 3-2 2 6 3 1 4-5 3 0 4-3 2 4" : "M1 8l4-3 5-4 2 5 3 2 4-1 4-5"}
            fill="none" stroke="#222" strokeWidth="1.200"
          />
        </Vibrato>
      ))}
    </Roll>
  );
}

function ParameterGraph() {
  return (
    <Graph shapeRendering="crispEdges">
      <defs>
        <pattern id="bars" x="38" width="64" height="206" patternUnits="userSpaceOnUse">
          <rect width="1" height="206" fill="#8c8c8c" />
        </pattern>
        <pattern id="beats" x="6" width="16" height="206" patternUnits="userSpaceOnUse">
          <path d="M.5 7v6M.5 97v12M.5 193v6" stroke="#9a9a9a" />
        </pattern>
        <pattern id="barsLight" x="38" width="64" height="206" patternUnits="userSpaceOnUse">
          <rect width="1" height="206" fill="#fff" fillOpacity="0.3" />
        </pattern>
        <pattern id="beatsLight" x="6" width="16" height="206" patternUnits="userSpaceOnUse">
          <path d="M.5 97v12M.5 193v6" stroke="#fff" strokeOpacity="0.2" />
        </pattern>
        <clipPath id="dyn"><polygon points={dynArea} shapeRendering="crispEdges" /></clipPath>
      </defs>
      <rect y="1" width="100%" height="5" fill="url(#bars)" opacity="0.35" />
      <rect y="200" width="100%" height="6" fill="url(#bars)" opacity="0.5" />
      <rect y="6" width="100%" height="193" fill="url(#bars)" />
      <rect width="100%" height="206" fill="url(#beats)" />
      {velBars.map((b) => <rect key={b.x} x={b.x} y={b.y} width={b.w} height={199 - b.y} fill="#141414" />)}
      <rect y="6" width="100%" height="1" fill="#a0a0a0" />
      <g clipPath="url(#dyn)">
        <rect width="100%" height="206" fill="#adadad" />
        {velBars.map((b) => <rect key={b.x} x={b.x} y={b.y} width={b.w} height={199 - b.y} fill="#c0c0c0" />)}
        <rect width="100%" height="206" fill="url(#barsLight)" />
        <rect width="100%" height="206" fill="url(#beatsLight)" />
      </g>
      <rect y="199" width="100%" height="1" fill="#444" />
    </Graph>
  );
}

function MusicalEditor() {
  return (
    <Panel $active>
      <PanelTitle>
        <PanelName>MUSICAL EDITOR -  [Megpoid Power]</PanelName>
        <PanelButtons />
      </PanelTitle>
      <PanelBody>
        <Ruler label={84} pitch={64} offset={38} first={9} count={24} />
        <Band $h={2} />
        <Band $h={2} $dark />
        <RollArea>
          <Keyboard>
            {keys.map((k, i) => <Key key={i} $h={k.h} $black={k.b} $hot={k.hot}>{k.t}</Key>)}
          </Keyboard>
          <PianoRoll />
          <VColumn $bg="#3a3a3a">
            <ScrollArrow dir="up" />
            <ScrollTrack $vertical><VThumb $start={100} $size={37} /></ScrollTrack>
            <ScrollArrow dir="down" />
          </VColumn>
        </RollArea>
        <HRow $h={13} $bg="#3a3a3a">
          <HSpacer $w={84} />
          <ScrollArrow dir="left" />
          <ScrollTrack><HThumb $start={162} $size={508} /></ScrollTrack>
          <ScrollArrow dir="right" />
          <ZoomBox><Zoom type="range" aria-label="Horizontal zoom" defaultValue={2} /></ZoomBox>
          <HEnd />
        </HRow>
        <Band $h={2} />
        <ParamArea>
          <ParamList>
            <ParamBlank />
            {params.map((p, i) => (
              <React.Fragment key={p}>
                <EyeButton $on={i < 2} aria-label={`Show ${p}`}><Eye /></EyeButton>
                <ParamButton $active={p === "DYN"}>{p}</ParamButton>
              </React.Fragment>
            ))}
          </ParamList>
          <Limits><span>127</span><span>0</span></Limits>
          <ParameterGraph />
        </ParamArea>
        <Splitter aria-label="Collapse parameters">
          <svg width="8" height="5"><path d="M0 1h8L4 5z" fill="#333" /></svg>
        </Splitter>
        <BottomEdge />
      </PanelBody>
    </Panel>
  );
}

export default function App() {
  return (
    <>
      <GlobalStyle />
      <Frame>
        <TitleBar>
          <Logo viewBox="0 0 16 16"><rect width="16" height="16" fill="#000" /><path d="M4.500 4l3 8 3-8M11 11.500h1.500" fill="none" stroke="#fff" strokeWidth="1.600" /></Logo>
          <WindowTitle>VOCALOID3 Editor - MUSICAL EDITOR</WindowTitle>
          <CaptionButtons>
            <CaptionButton aria-label="Minimize"><svg width="12" height="12"><path d="M.5 6.500h11v4H.5z" fill="#fff" stroke="#4a5a70" /></svg></CaptionButton>
            <CaptionButton aria-label="Maximize"><svg width="12" height="12"><path d="M.5 1.500h11v9H.5zM4 4.500v3h4v-3z" fill="#fff" fillRule="evenodd" stroke="#4a5a70" /></svg></CaptionButton>
            <CaptionButton $close aria-label="Close"><svg width="12" height="12"><path d="M2 2l8 8M10 2l-8 8" stroke="#5a3030" strokeWidth="4" /><path d="M2 2l8 8M10 2l-8 8" stroke="#fff" strokeWidth="2.500" /></svg></CaptionButton>
          </CaptionButtons>
        </TitleBar>
        <MenuBar>
          {menus.map(([name, key]) => <MenuItem key={key}>{name}(<u>{key}</u>)</MenuItem>)}
        </MenuBar>
        <MainToolbar />
        <Workspace>
          <TrackEditor />
          <MusicalEditor />
        </Workspace>
      </Frame>
      <ImeBar>
        <span>中</span>
        <svg width="9" height="10"><path d="M5 0a5 5 0 1 1-5 7c4 1 6-3 5-7z" fill="#fff" /></svg>
        <svg width="14" height="13"><path d="M7 5L1 0 0 3l2 4 2 1-2 4 3 1 2-4 2 4 3-1-2-4 2-1 2-4-1-3z" fill="#fff" /></svg>
        <svg width="11" height="11" fill="none" stroke="#fff" strokeWidth="1.800"><circle cx="3" cy="3" r="2" /><circle cx="7.500" cy="5.500" r="2" /><path d="M9 7l-3 3" /></svg>
      </ImeBar>
    </>
  );
}
